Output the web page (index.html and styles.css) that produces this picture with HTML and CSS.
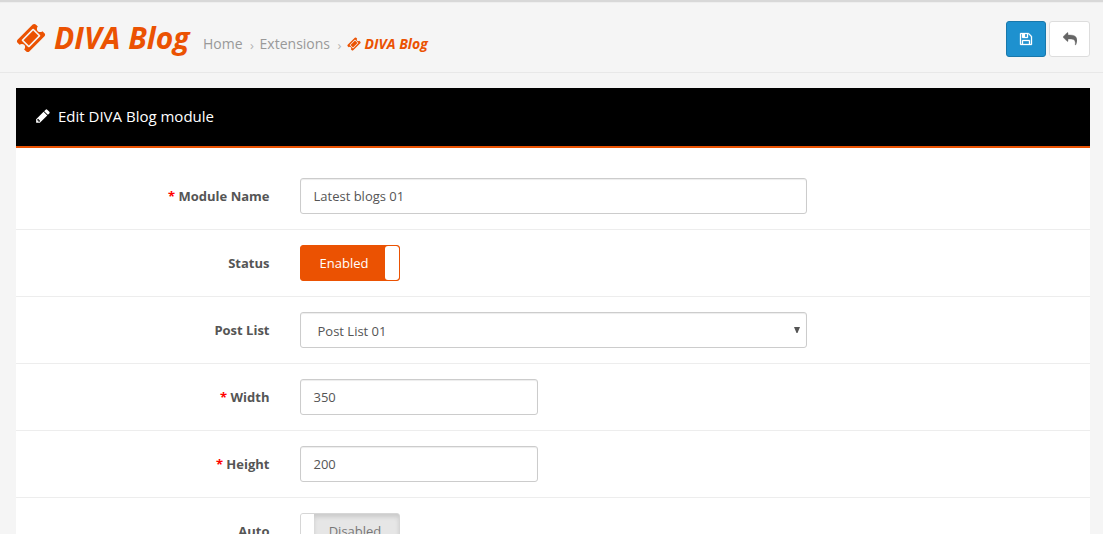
FILE: index.html
```html
<!DOCTYPE html>
<html lang="en">
<head>
<meta charset="utf-8">
<title>DIVA Blog</title>
<link rel="stylesheet" href="styles.css">
</head>
<body>
<svg class="defs" aria-hidden="true">
  <symbol id="ticket" viewBox="0 0 1792 1792"><path d="M1024 452l316 316-572 572-316-316zm-211 979l618-618q19-19 19-45t-19-45l-362-362q-18-18-45-18t-45 18l-618 618q-19 19-19 45t19 45l362 362q18 18 45 18t45-18zm889-637l-907 908q-37 37-90.5 37t-90.5-37l-126-126q56-56 56-136t-56-136-136-56-136 56l-125-126q-37-37-37-90.5t37-90.5l907-906q37-37 90.5-37t90.5 37l125 125q-56 56-56 136t56 136 136 56 136-56l126 125q37 37 37 90.5t-37 90.5z"/></symbol>
</svg>
<header class="page-header">
  <h1 class="title"><svg class="title-icon"><use href="#ticket"/></svg>DIVA Blog</h1>
  <nav class="breadcrumb">
    <a class="crumb">Home</a><span class="sep">›</span><a class="crumb">Extensions</a><span class="sep">›</span><a class="crumb current"><svg class="crumb-icon"><use href="#ticket"/></svg>DIVA Blog</a>
  </nav>
  <div class="actions">
    <button class="btn btn-primary" aria-label="Save"><svg class="btn-icon save-icon" viewBox="0 0 1792 1792"><path d="M512 1536h768v-384h-768v384zm896 0h128v-896q0-14-10-38.500t-20-34.500l-281-281q-10-10-34-20t-39-10v416q0 40-28 68t-68 28h-576q-40 0-68-28t-28-68v-416h-128v1280h128v-416q0-40 28-68t68-28h832q40 0 68 28t28 68v416zm-384-928v-320q0-13-9.500-22.500t-22.500-9.500h-192q-13 0-22.500 9.500t-9.500 22.500v320q0 13 9.500 22.500t22.500 9.500h192q13 0 22.500-9.500t9.500-22.500zm640 32v928q0 40-28 68t-68 28h-1344q-40 0-68-28t-28-68v-1344q0-40 28-68t68-28h928q40 0 88 20t76 48l280 280q28 28 48 76t20 88z"/></svg></button>
    <button class="btn btn-default" aria-label="Back"><svg class="btn-icon reply-icon" viewBox="0 0 1792 1792"><path d="M1792 1120q0 166-127 451-3 7-10.500 24t-13.500 30-13 22q-12 17-28 17-15 0-23.500-10t-8.500-25q0-9 2.500-26.500t2.500-23.500q5-68 5-123 0-101-17.500-181t-48.500-138.500-80-101-105.500-69.500-133-42.500-154-21.500-175.500-6h-224v256q0 26-19 45t-45 19-45-19l-512-512q-19-19-19-45t19-45l512-512q19-19 45-19t45 19 19 45v256h224q713 0 875 403 53 134 53 333z"/></svg></button>
  </div>
</header>
<main class="panel">
  <div class="panel-heading"><svg class="panel-icon" viewBox="0 0 1792 1792"><path d="M491 1536l91-91-235-235-91 91v107h128v128h107zm469-1120l416 416-832 832h-416v-416zm683 96q0 53-37 90l-166 166-416-416 166-165q36-38 90-38 53 0 91 38l235 234q37 39 37 91z"/></svg>Edit DIVA Blog module</div>
  <form class="form">
    <div class="row"><label class="label required">Module Name</label><div class="control wide">Latest blogs 01</div></div>
    <div class="row"><label class="label">Status</label><div class="toggle on"><span class="toggle-text">Enabled</span><span class="knob"></span></div></div>
    <div class="row"><label class="label">Post List</label><div class="control wide select">Post List 01<svg class="arrow" viewBox="0 0 6 6"><path d="M0 0h6L3.500 6h-1z"/></svg></div></div>
    <div class="row"><label class="label required">Width</label><div class="control">350</div></div>
    <div class="row"><label class="label required">Height</label><div class="control">200</div></div>
    <div class="row"><label class="label">Auto</label><div class="toggle off"><span class="knob"></span><span class="toggle-text">Disabled</span></div></div>
  </form>
</main>
</body>
</html>
```
FILE: styles.css
```css
* { box-sizing: border-box; }
html, body { height: 534px; overflow: hidden; }
body { margin: 0; background: #f5f5f5; color: #555; font: 13px/20px "Open Sans", sans-serif; }
svg { fill: currentColor; display: block; flex: none; }
.defs { display: none; }

.page-header { display: flex; height: 73px; padding: 0 13px 0 16px; border-top: 2px solid #d8d8d8; border-bottom: 1px solid #e8e8e8; box-shadow: inset 0 1px 1px #eee; }
.title { display: flex; align-items: center; gap: 8px; margin: 0; height: 72px; color: #eb5202; font-size: 30px; font-weight: 700; font-style: italic; line-height: 40px; white-space: nowrap; }
.title-icon { width: 30px; height: 30px; }
.breadcrumb { display: flex; align-items: center; height: 20px; margin: 32px 0 0 13.5px; font-size: 14px; color: #999; white-space: nowrap; }
.sep { width: 17px; padding: 1px 0 0 7.5px; color: #b4b4b4; font-size: 13px; }
.current { display: flex; align-items: center; gap: 3.5px; color: #eb5202; font-weight: 700; font-style: italic; }
.crumb-icon { width: 14px; height: 14px; }
.actions { display: flex; gap: 3px; margin: 19px 0 0 auto; }
.btn { display: flex; align-items: center; justify-content: center; width: 40px; height: 36px; padding: 0; border: 1px solid; border-radius: 3px; }
.btn-primary { background: #1e91cf; border-color: #1978ab; color: #fff; }
.btn-default { width: 41px; background: #fff; border-color: #ddd; color: #666; }
.btn-icon { width: 14px; height: 14px; }
.save-icon { stroke: currentColor; stroke-width: 40; }
.reply-icon { stroke: currentColor; stroke-width: 50; }

.panel { margin: 15px 13px 0 16px; background: #fff; }
.panel-heading { display: flex; align-items: center; gap: 7px; height: 60px; padding: 0 19px 2px; background: #000; border-bottom: 2px solid #eb5202; color: #fff; font-size: 15px; }
.panel-icon { width: 16px; height: 16px; }
.form { padding-top: 15px; }
.row { display: flex; height: 67px; padding-top: 15px; border-bottom: 1px solid #ededed; }
.row:last-child { height: 36px; border-bottom: 0; }
.label { width: 253.5px; margin-right: 30.5px; padding-top: 8px; font-weight: 700; text-align: right; }
.required::before { content: "* "; color: #f00; }
.control { width: 238px; height: 36px; padding: 7px 12.5px; border: 1px solid #ccc; border-radius: 3px; box-shadow: inset 0 1px 1px rgba(0, 0, 0, .075); }
.wide { width: 507px; }
.select { display: flex; justify-content: space-between; padding: 8px 6px 0 16.5px; }
.arrow { width: 6px; height: 6px; margin-top: 6px; }
.toggle { display: flex; width: 100px; height: 36px; border: 1px solid; border-radius: 3px; line-height: 34px; overflow: hidden; }
.toggle-text { flex: 1; text-align: center; }
.knob { width: 14px; background: #fff; border-radius: 3px; }
.on { background: #eb5202; border-color: #eb5202; color: #fff; }
.on .toggle-text { padding-left: 2px; }
.off { background: #e6e6e6; border-color: #d6d6d6; color: #777; }
.off .knob { width: 13px; border-radius: 0; }
.off .toggle-text { padding-right: 3px; box-shadow: inset 0 3px 4px rgba(0, 0, 0, .12); }
```
